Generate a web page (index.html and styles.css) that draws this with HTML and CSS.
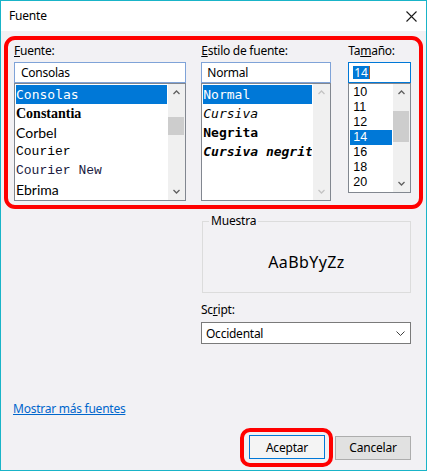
FILE: index.html
```html
<!DOCTYPE html>
<html lang="es">
<head>
<meta charset="utf-8">
<title>Fuente</title>
<link rel="stylesheet" href="styles.css">
</head>
<body>
<div class="window">
  <div class="titlebar">
    <span class="title">Fuente</span>
    <svg class="close" width="11" height="11" viewBox="0 0 11 11"><path d="M0.5 0.5 L10.5 10.5 M10.5 0.5 L0.5 10.5" stroke="#1a1a1a" stroke-width="1.1" fill="none"/></svg>
  </div>
  <div class="content">
    <div class="hl-top">
      <div class="col col-font">
        <div class="label"><u>F</u>uente:</div>
        <div class="input">Consolas</div>
        <div class="list list-font">
          <div class="items">
            <div class="item sel f-mono">Consolas</div>
            <div class="item f-constantia">Constantia</div>
            <div class="item f-corbel">Corbel</div>
            <div class="item f-courier">Courier</div>
            <div class="item f-couriernew">Courier New</div>
            <div class="item f-ebrima">Ebrima</div>
          </div>
          <div class="scroll">
            <div class="arrow"><svg width="7" height="5" viewBox="0 0 7 5"><path d="M0.5 4 L3.5 1 L6.5 4" stroke="#606060" stroke-width="1.3" fill="none"/></svg></div>
            <div class="track"><div class="thumb thumb-font"></div></div>
            <div class="arrow"><svg width="7" height="5" viewBox="0 0 7 5"><path d="M0.5 1 L3.5 4 L6.5 1" stroke="#606060" stroke-width="1.3" fill="none"/></svg></div>
          </div>
        </div>
      </div>
      <div class="col col-style">
        <div class="label"><u>E</u>stilo de fuente:</div>
        <div class="input">Normal</div>
        <div class="list list-style">
          <div class="items">
            <div class="item sel f-mono">Normal</div>
            <div class="item f-mono it">Cursiva</div>
            <div class="item f-mono bd">Negrita</div>
            <div class="item f-mono it bd">Cursiva negrita</div>
          </div>
          <div class="scroll">
            <div class="arrow"><svg width="7" height="5" viewBox="0 0 7 5"><path d="M0.5 4 L3.5 1 L6.5 4" stroke="#c4c4c4" stroke-width="1.3" fill="none"/></svg></div>
            <div class="track"></div>
            <div class="arrow"><svg width="7" height="5" viewBox="0 0 7 5"><path d="M0.5 1 L3.5 4 L6.5 1" stroke="#c4c4c4" stroke-width="1.3" fill="none"/></svg></div>
          </div>
        </div>
      </div>
      <div class="col col-size">
        <div class="label">Ta<u>m</u>año:</div>
        <div class="input input-focus"><span class="selected-text">14</span><span class="caret"></span></div>
        <div class="list list-size">
          <div class="items">
            <div class="item num">10</div>
            <div class="item num">11</div>
            <div class="item num">12</div>
            <div class="item num sel">14</div>
            <div class="item num">16</div>
            <div class="item num">18</div>
            <div class="item num">20</div>
          </div>
          <div class="scroll">
            <div class="arrow"><svg width="7" height="5" viewBox="0 0 7 5"><path d="M0.5 4 L3.5 1 L6.5 4" stroke="#606060" stroke-width="1.3" fill="none"/></svg></div>
            <div class="track"><div class="thumb thumb-size"></div></div>
            <div class="arrow"><svg width="7" height="5" viewBox="0 0 7 5"><path d="M0.5 1 L3.5 4 L6.5 1" stroke="#606060" stroke-width="1.3" fill="none"/></svg></div>
          </div>
        </div>
      </div>
    </div>

    <div class="lower">
      <fieldset class="sample">
        <legend>Muestra</legend>
        <div class="sample-text">AaBbYyZz</div>
      </fieldset>
      <div class="label script-label">Sc<u>r</u>ipt:</div>
      <div class="select">
        <span>Occidental</span>
        <svg width="9" height="5" viewBox="0 0 9 5"><path d="M0.5 0.5 L4.5 4.5 L8.5 0.5" stroke="#404040" stroke-width="1" fill="none"/></svg>
      </div>
    </div>

    <a class="more">Mostrar más fuentes</a>

    <div class="buttons">
      <div class="hl-btn"><button class="btn btn-default">Aceptar</button></div>
      <button class="btn btn-cancel">Cancelar</button>
    </div>
  </div>
</div>
</body>
</html>
```

FILE: styles.css
```css
* { box-sizing: border-box; }

body {
  margin: 0;
  font-family: "Noto Sans", "Open Sans", sans-serif;
  font-size: 12px;
  color: #000;
  background: #fff;
}

.window {
  width: 427px;
  height: 471px;
  border: 1px solid #19b4c8;
  display: flex;
  flex-direction: column;
  background: #f2f1f4;
}

.titlebar {
  height: 30px;
  flex: none;
  background: #fff;
  display: flex;
  align-items: center;
  justify-content: space-between;
  padding: 0 9px 0 8px;
}

.title {
  line-height: 16px;
  letter-spacing: -0.2px;
}

.content {
  flex: 1;
  display: flex;
  flex-direction: column;
}

.hl-top {
  margin: 5px 3px 0 3px;
  border: 4px solid #ff0000;
  border-radius: 11px;
  padding: 3px 8px 4px 6px;
  display: flex;
  align-items: flex-start;
}

.col { display: flex; flex-direction: column; }
.col-font { width: 173px; }
.col-style { width: 130px; margin-left: 15px; }
.col-size { width: 63px; margin-left: 17px; }

.label {
  line-height: 16px;
  height: 16px;
  letter-spacing: -0.25px;
  margin-bottom: 3px;
  white-space: nowrap;
}

.input {
  height: 21px;
  border: 1px solid #7fa3d8;
  background: #fff;
  padding: 0 6px;
  line-height: 19px;
  letter-spacing: -0.25px;
  white-space: nowrap;
}

.col-style .input { padding-left: 5px; }

.input-focus {
  border-color: #0078d7;
  padding-left: 4px;
  display: flex;
  align-items: center;
}

.selected-text {
  background: #0078d7;
  color: #fff;
  line-height: 13px;
  height: 13px;
  padding: 0 1px;
}

.caret {
  width: 1px;
  height: 13px;
  background: #b05a1e;
}

.list {
  display: flex;
  border: 1px solid #828790;
  background: #fff;
}

.list-font, .list-style { height: 118px; }
.list-size { height: 110px; }

.items {
  flex: 1;
  min-width: 0;
  padding: 1px;
  overflow: hidden;
}

.item {
  height: 19px;
  line-height: 19px;
  white-space: nowrap;
  overflow: hidden;
}

.item.sel {
  background: #0078d7;
  color: #fff;
}

.f-mono { font-family: "DejaVu Sans Mono", monospace; font-size: 13px; }
.f-constantia { font-family: "Liberation Serif", serif; font-size: 14px; font-weight: bold; }
.f-corbel { font-family: "Lato", sans-serif; font-size: 14px; }
.f-courier { font-family: "Liberation Mono", monospace; font-size: 13px; }
.f-couriernew { font-family: "Liberation Mono", monospace; font-size: 13px; color: #1a1a40; }
.f-ebrima { font-family: "Lato", sans-serif; font-size: 14px; }
.it { font-style: italic; }
.bd { font-weight: bold; }

.item.num {
  height: 15px;
  line-height: 15px;
  font-family: "Liberation Sans", Arial, sans-serif;
  font-size: 12.5px;
  padding-left: 3px;
}

.scroll {
  width: 17px;
  flex: none;
  display: flex;
  flex-direction: column;
  background: #f0f0f0;
}

.arrow {
  height: 17px;
  flex: none;
  display: flex;
  align-items: center;
  justify-content: center;
}

.track { flex: 1; }

.thumb {
  margin: 0 1px 0 0;
  background: #cdcdcd;
}

.thumb-font { margin-top: 16px; height: 18px; }
.thumb-size { margin-top: 10px; height: 31px; }

.lower {
  margin: 4px 0 0 200px;
  width: 210px;
  display: flex;
  flex-direction: column;
}

.sample {
  margin: 0 0 0 1px;
  padding: 0;
  min-width: 0;
  width: 209px;
  height: 80px;
  border: 1px solid #dcdcdc;
}

.sample legend {
  margin-left: 6px;
  padding: 0 2px;
  line-height: 16px;
  letter-spacing: -0.2px;
}

.sample-text {
  height: 62px;
  display: flex;
  align-items: center;
  justify-content: center;
  font-size: 16px;
  padding-top: 3px;
  letter-spacing: 0.4px;
}

.script-label {
  margin-top: 9px;
  margin-bottom: 4px;
}

.select {
  height: 22px;
  border: 1px solid #7a7a7a;
  background: #fff;
  display: flex;
  align-items: center;
  justify-content: space-between;
  padding: 0 5px 0 4px;
  letter-spacing: -0.25px;
}

.more {
  margin: auto 0 0 12px;
  line-height: 16px;
  color: #0066cc;
  text-decoration: underline;
  letter-spacing: -0.25px;
  align-self: flex-start;
}

.buttons {
  margin: 11px 15px 3px 0;
  display: flex;
  justify-content: flex-end;
  align-items: center;
}

.hl-btn {
  border: 4px solid #ff0000;
  border-radius: 10px;
  padding: 3px 4px 4px 5px;
}

.btn {
  width: 76px;
  height: 24px;
  font-family: "Noto Sans", "Open Sans", sans-serif;
  font-size: 12px;
  letter-spacing: -0.2px;
  color: #000;
  padding: 0;
  display: block;
}

.btn-default {
  border: 1px solid #0078d7;
  background: #f4f4f4;
}

.btn-cancel {
  margin-left: 2px;
  border: 1px solid #adadad;
  background: #e1e1e1;
}
```
